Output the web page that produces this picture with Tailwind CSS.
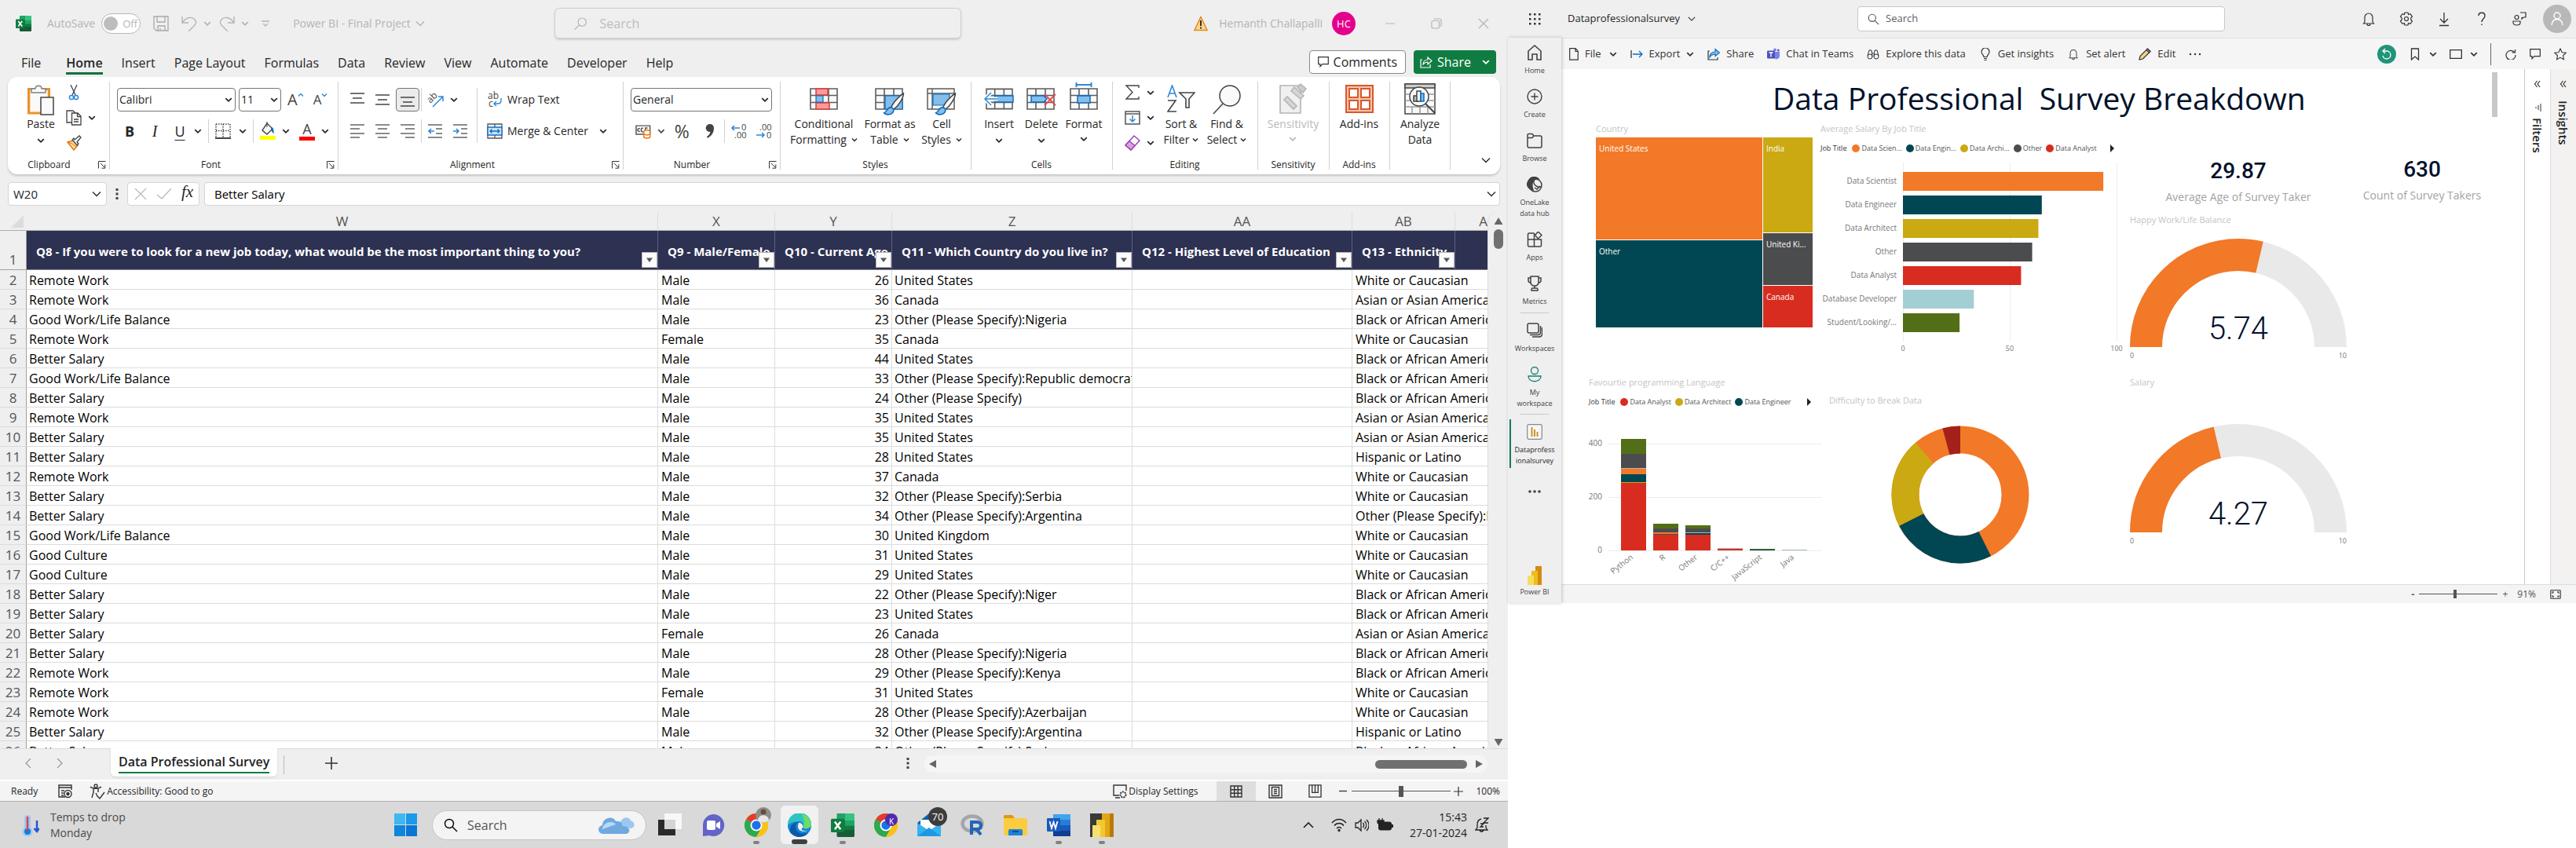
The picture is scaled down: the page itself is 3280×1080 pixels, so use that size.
<!DOCTYPE html>
<html lang="en">
<head>
<meta charset="utf-8">
<title>Survey workbook and report</title>
<script src="https://cdn.jsdelivr.net/npm/@tailwindcss/browser@4"></script>
</head>
<body class="bg-white font-['Open_Sans','Noto_Sans',sans-serif] text-[#262626]">

<!-- Shared symbols -->
<svg class="hidden" aria-hidden="true">
  <symbol id="chev" viewBox="0 0 8 8"><path d="M1 2.5l3 3 3-3" fill="none" stroke="currentColor" stroke-width="1.4"/></symbol>
  <symbol id="chevbig" viewBox="0 0 12 12"><path d="M1 3.5l5 5 5-5" fill="none" stroke="currentColor" stroke-width="1.3"/></symbol>
  <symbol id="mag" viewBox="0 0 18 18"><circle cx="11" cy="7" r="5.5" fill="none" stroke="currentColor" stroke-width="1.3"/><path d="M7 11l-6 6" stroke="currentColor" stroke-width="1.3"/></symbol>
  <symbol id="magr" viewBox="0 0 18 18"><circle cx="7" cy="7" r="5.5" fill="none" stroke="currentColor" stroke-width="1.4"/><path d="M11 11l6 6" stroke="currentColor" stroke-width="1.4"/></symbol>
  <symbol id="launch" viewBox="0 0 10 10"><path d="M.5 9.500V.5H9.500M3 3l5 5M8.800 4.500v4.700H4.500" fill="none" stroke="#333" stroke-width="1"/></symbol>
  <symbol id="excel" viewBox="0 0 20 20"><path fill="#21a366" d="M5 0h7.500v6H5z"/><path fill="#33c481" d="M12 0h7a1 1 0 0 1 1 1v5h-8z"/><path fill="#107c41" d="M5 6h7.500v8H5z"/><path fill="#107c41" d="M12 10h8v5h-8z"/><path fill="#21a366" d="M12 6h8v4.500h-8z"/><path fill="#185c37" d="M5 14h15v5a1 1 0 0 1-1 1H6a1 1 0 0 1-1-1z"/><rect y="4.500" width="11.500" height="11.500" rx="1" fill="#107c41"/><path d="M3.300 7l4.900 6.500M8.200 7l-4.900 6.500" stroke="#fff" stroke-width="1.7"/></symbol>
  <symbol id="chrome" viewBox="0 0 30 30"><circle cx="15" cy="15" r="15" fill="#fbc116"/><path d="M15 15L2 7.500A15 15 0 0 1 28 7.500H15z" fill="#e33b2e"/><path d="M15 15L2 7.500A15 15 0 0 0 15 30l6.500-11.200z" fill="#2da94f"/><path d="M15 7.500h13A15 15 0 0 1 15 30l6.500-11.200z" fill="#fbc116"/><circle cx="15" cy="15" r="7.500" fill="#fff"/><circle cx="15" cy="15" r="5.700" fill="#1a73e8"/></symbol>
  <symbol id="grid3" viewBox="0 0 36 28"><path d="M1 1h34v26H1zM12 1v26M24 1v26M1 9.500h34M1 18.500h34" fill="#fafafa" stroke="#5c5c5c" stroke-width="1.600"/></symbol>
  <symbol id="brush" viewBox="0 0 26 28"><path d="M25 1C20 4 12 12 10 18l3 2.500C18 17 25 7 25 1z" fill="#fafafa" stroke="#444" stroke-width="1.500"/><path d="M10 18c-6 0-5 6-9 7 4 3.500 12 2 12-4.500z" fill="#83beec" stroke="#0f6cbd" stroke-width="1.500"/></symbol>
  <symbol id="bell" viewBox="0 0 16 20"><path d="M3 14V8a5 5 0 0 1 10 0v6l1.500 2H1.500zM6 16.500a2 2 0 0 0 4 0" fill="none" stroke="currentColor" stroke-width="1.200"/></symbol>
</svg>

<div class="grid grid-cols-[24fr_17fr] items-start">

<!-- ================= Spreadsheet desktop ================= -->
<section class="flex h-screen min-w-0 flex-col overflow-hidden bg-[#efefef]">

  <header class="flex h-[60px] shrink-0 items-center pl-5 text-sm text-[#b4b4b4]">
    <svg class="size-5"><use href="#excel"/></svg>
    <label class="ml-5 flex items-center gap-2"><span>AutoSave</span>
      <span class="flex h-[26px] w-[50px] items-center gap-1.5 rounded-full border border-[#b8b8b8] bg-white pl-0.5 text-[13px]"><input type="checkbox" class="size-[18px] appearance-none rounded-full bg-[#bdbdbd]">Off</span>
    </label>
    <button class="ml-4" aria-label="Save"><svg class="size-5" viewBox="0 0 20 20" fill="none" stroke="#a9a9a9" stroke-width="1.300"><path d="M1 1h18v18H4l-3-3zM5 1v7h10V1M6 19v-6h9v6M9 19v-3"/></svg></button>
    <button class="ml-4 flex items-center gap-2" aria-label="Undo"><svg class="size-5" viewBox="0 0 20 20" fill="none" stroke="#b4b4b4" stroke-width="1.400"><path d="M1 1v8h8M1 9C6 2 12 1 16 4s3 7-1 10l-6 6"/></svg><svg class="size-2.5"><use href="#chev"/></svg></button>
    <button class="ml-2.5 flex items-center gap-2" aria-label="Redo"><svg class="size-5" viewBox="0 0 20 20" fill="none" stroke="#b4b4b4" stroke-width="1.400"><path d="M19 1v8h-8M19 9C14 2 8 1 4 4s-3 7 1 10l6 6"/></svg><svg class="size-2.5"><use href="#chev"/></svg></button>
    <button class="ml-4" aria-label="Customize toolbar"><svg class="size-2.5" viewBox="0 0 10 10" fill="none" stroke="#b4b4b4" stroke-width="1.300"><path d="M0 2h10M2 5l3 3 3-3"/></svg></button>
    <button class="ml-[30px] flex items-center gap-1.5 whitespace-nowrap">Power BI - Final Project <svg class="size-3"><use href="#chevbig"/></svg></button>
    <label class="ml-[165px] flex h-10 w-[518px] items-center gap-4 rounded-md border border-b-2 border-[#cfcfcf] pl-6 text-[#b4b4b4] shadow-sm">
      <svg class="size-[18px]"><use href="#mag"/></svg>
      <input class="w-full bg-transparent text-base outline-none placeholder:text-[#bcbcbc]" placeholder="Search" aria-label="Search workbook">
    </label>
    <div class="ml-auto flex items-center pr-6">
      <svg class="h-5 w-[18px]" viewBox="0 0 18 20"><path d="M9 1.500l8 17H1z" fill="#fbd88c" stroke="#e08a26" stroke-width="1.500"/><path d="M9 6v7M9 14.500v2" stroke="#333" stroke-width="2"/></svg>
      <span class="ml-3.5 whitespace-nowrap">Hemanth Challapalli</span>
      <span class="ml-3 grid size-[30px] place-items-center rounded-full bg-[#e3008c] text-[13px] text-white">HC</span>
      <button class="ml-[38px]" aria-label="Minimize"><svg class="size-3" viewBox="0 0 12 12"><path d="M0 6h12" stroke="#b4b4b4"/></svg></button>
      <button class="ml-[46px]" aria-label="Restore"><svg class="size-3.5" viewBox="0 0 14 14" fill="none" stroke="#b4b4b4" stroke-width="1.200"><rect x="1" y="3.500" width="9.500" height="9.500" rx="1.500"/><path d="M3.500 1H11a2 2 0 0 1 2 2v8"/></svg></button>
      <button class="ml-[46px]" aria-label="Close"><svg class="size-3.5" viewBox="0 0 14 14"><path d="M1 1l12 12M13 1L1 13" stroke="#b4b4b4" stroke-width="1.200"/></svg></button>
    </div>
  </header>

  <nav class="flex h-[38px] shrink-0 items-start gap-6 whitespace-nowrap pl-[27px] pr-[15px] pt-2 text-base leading-6">
    <a href="#">File</a>
    <a href="#" class="ml-2 border-b-[3px] border-[#0f703b] font-semibold">Home</a>
    <a href="#">Insert</a><a href="#">Page Layout</a><a href="#">Formulas</a><a href="#">Data</a><a href="#">Review</a><a href="#">View</a><a href="#">Automate</a><a href="#">Developer</a><a href="#">Help</a>
    <button class="-mt-1 ml-auto flex h-[30px] items-center gap-1.5 rounded border border-[#8a8a8a] bg-white px-2.5"><svg class="size-3.5" viewBox="0 0 14 14"><path d="M.7.7h12.600v9H6l-3 3v-3H.7z" fill="none" stroke="#333" stroke-width="1.200"/></svg>Comments</button>
    <button class="-ml-3.5 -mt-1 flex h-[30px] items-center gap-1.5 rounded bg-[#107c41] px-2 text-white"><svg class="size-4" viewBox="0 0 16 16" fill="none" stroke="#fff" stroke-width="1.200"><path d="M3 5H1v10h12v-4M4 11c0-4 3-6 6-6V2l5 4.500-5 4.500V8c-3 0-4.500 1-6 3z"/></svg>Share<svg class="ml-2 size-2.5"><use href="#chev"/></svg></button>
  </nav>

  <!-- Ribbon -->
  <div class="mx-2.5 flex h-[124px] shrink-0 rounded-xl bg-white text-sm shadow-[0_2px_3px_rgba(0,0,0,0.18)]">
    <section class="relative flex w-[129px] shrink-0 pl-5">
      <button class="flex w-11 flex-col items-center pt-2.5 leading-5"><svg class="h-10 w-[34px]" viewBox="0 0 34 40"><path d="M1.500 5.500h26V36H1.500z" fill="#fafafa" stroke="#e8912d" stroke-width="3"/><path d="M3.500 7.500h22V34h-22z" fill="#fafafa" stroke="#fbe0a8"/><path d="M5 10V5h5c0-5 8-5 8 0h5v5z" fill="#fafafa" stroke="#808080" stroke-width="1.400"/><path d="M17 16h16v22H17z" fill="#fafafa" stroke="#444" stroke-width="1.500"/></svg>Paste<svg class="mt-1.5 size-2.5"><use href="#chev"/></svg></button>
      <div class="ml-2.5 flex flex-col gap-3 pt-2.5">
        <button aria-label="Cut"><svg class="size-5" viewBox="0 0 20 20" fill="none"><path d="M6 0l6 13M14 0L8 13" stroke="#444" stroke-width="1.300"/><circle cx="7" cy="16" r="2.600" stroke="#2b88d8" stroke-width="1.500"/><circle cx="13" cy="16" r="2.600" stroke="#2b88d8" stroke-width="1.500"/></svg></button>
        <button class="flex items-center gap-2" aria-label="Copy"><svg class="size-5" viewBox="0 0 20 20" fill="#fafafa" stroke="#444" stroke-width="1.300"><path d="M8 16H1V1h8l3 3"/><path d="M7.500 4H15l4 4v11H7.500zM14.500 4v4.500H19M10 12h6M10 15h6"/></svg><svg class="size-2.5"><use href="#chev"/></svg></button>
        <button aria-label="Format Painter"><svg class="size-5" viewBox="0 0 20 20"><path d="M2 9l8 10 5-6-6-6z" fill="#fbe0a8" stroke="#e8740c" stroke-width="1.500"/><path d="M2 9l6 2 5 4" stroke="#e8740c" fill="none"/><path d="M8 6l6 7 2-2-2-2 5-6-2-2-6 5-1-2z" fill="#fafafa" stroke="#444" stroke-width="1.300"/></svg></button>
      </div>
      <span class="absolute inset-x-0 bottom-1 pr-6 text-center text-xs">Clipboard</span><svg class="absolute bottom-[7px] right-1 size-2.5"><use href="#launch"/></svg>
    </section>
    <section class="relative w-[291px] shrink-0 pt-3.5 before:absolute before:inset-y-1.5 before:left-0 before:w-px before:bg-[#d1d1d1]">
      <div class="flex h-[30px] items-center pl-2.5">
        <label class="relative"><select aria-label="Font name" class="h-[30px] w-[151px] appearance-none rounded border border-[#757575] bg-white pl-0.5"><option>Calibri</option></select><svg class="pointer-events-none absolute right-1 top-2.5 size-2.5"><use href="#chev"/></svg></label>
        <label class="relative ml-1"><select aria-label="Font size" class="h-[30px] w-[54px] appearance-none rounded border border-[#757575] bg-white pl-0.5"><option>11</option></select><svg class="pointer-events-none absolute right-1 top-2.5 size-2.5"><use href="#chev"/></svg></label>
        <button class="ml-2 flex items-start text-[20px] leading-6 text-[#444]" aria-label="Grow font">A<svg class="mt-0.5 size-2 rotate-180 text-[#2b88d8]"><use href="#chev"/></svg></button>
        <button class="ml-3 flex items-start text-[17px] leading-6 text-[#444]" aria-label="Shrink font">A<svg class="mt-0.5 size-2 text-[#2b88d8]"><use href="#chev"/></svg></button>
      </div>
      <div class="mt-2.5 flex h-[30px] items-center pl-2.5 text-lg">
        <button class="w-8 font-bold">B</button><button class="w-8 font-['Liberation_Serif',serif] text-xl italic">I</button><button class="w-8 underline underline-offset-4">U</button>
        <svg class="ml-0.5 size-2.5"><use href="#chev"/></svg><i class="ml-2 h-full w-px bg-[#d1d1d1]"></i>
        <button class="ml-2" aria-label="Borders"><svg class="size-5" viewBox="0 0 20 20" fill="none" stroke="#444"><path d="M1 1h18v17M1 1v17M10 1v17M1 9.500h18" stroke-width="1.500" stroke-dasharray="1.500 1.500"/><path d="M0 19h20" stroke-width="2"/></svg></button>
        <svg class="ml-2.5 size-2.5"><use href="#chev"/></svg><i class="ml-2 h-full w-px bg-[#d1d1d1]"></i>
        <button class="ml-2" aria-label="Fill colour"><svg class="h-6 w-5" viewBox="0 0 20 24"><path d="M9 2L3 11l6 5 7-7z" fill="#fafafa" stroke="#444" stroke-width="1.400"/><path d="M9 0v7" stroke="#444"/><path d="M14 7c4 0 3 4 4 8-3-1-3-4-4-6z" fill="#0f6cbd"/><path d="M0 18h20v5H0z" fill="#ff0"/></svg></button>
        <svg class="ml-2 size-2.5"><use href="#chev"/></svg>
        <button class="ml-3 flex h-6 w-5 items-start justify-center border-b-[5px] border-[#f00] leading-[18px] text-[#444]" aria-label="Font colour">A</button>
        <svg class="ml-2 size-2.5"><use href="#chev"/></svg>
      </div>
      <span class="absolute inset-x-0 bottom-1 pr-8 text-center text-xs">Font</span><svg class="absolute bottom-[7px] right-1 size-2.5"><use href="#launch"/></svg>
    </section>
    <section class="relative w-[363px] shrink-0 pt-3.5 before:absolute before:inset-y-1.5 before:left-0 before:w-px before:bg-[#d1d1d1]">
      <div class="flex">
        <div class="flex flex-col gap-2.5 pl-2.5">
          <div class="flex h-[30px] items-center">
            <button class="grid size-[30px] place-items-center" aria-label="Top align"><svg class="size-[18px]" viewBox="0 0 18 18" stroke="#444" stroke-width="1.600"><path d="M0 1h18M3 7h12M0 13h18"/></svg></button>
            <button class="ml-0.5 grid size-[30px] place-items-center" aria-label="Middle align"><svg class="size-[18px]" viewBox="0 0 18 18" stroke="#444" stroke-width="1.600"><path d="M0 3h18M3 9h12M0 15h18"/></svg></button>
            <button class="ml-0.5 grid size-[30px] place-items-center rounded border border-[#757575] bg-[#ebebeb]" aria-label="Bottom align"><svg class="size-[18px]" viewBox="0 0 18 18" stroke="#444" stroke-width="1.600"><path d="M0 6h18M3 12h12M0 17h18"/></svg></button>
            <i class="ml-0.5 h-full w-px bg-[#d1d1d1]"></i>
            <button class="ml-2 flex items-center gap-2" aria-label="Orientation"><svg class="size-5 overflow-visible" viewBox="0 0 20 20"><text x="0" y="12" font-size="12" fill="#444" transform="rotate(-45 5 10)">ab</text><path d="M6 19L19 6M13 6h6v6" fill="none" stroke="#2b88d8" stroke-width="1.500"/></svg><svg class="size-2.5"><use href="#chev"/></svg></button>
          </div>
          <div class="flex h-[30px] items-center">
            <button class="grid size-[30px] place-items-center" aria-label="Align left"><svg class="size-[18px]" viewBox="0 0 18 18" stroke="#666" stroke-width="1.600"><path d="M0 1h18M0 6h12M0 12h18M0 17h12"/></svg></button>
            <button class="ml-0.5 grid size-[30px] place-items-center" aria-label="Centre"><svg class="size-[18px]" viewBox="0 0 18 18" stroke="#666" stroke-width="1.600"><path d="M0 1h18M3 6h12M0 12h18M3 17h12"/></svg></button>
            <button class="ml-0.5 grid size-[30px] place-items-center" aria-label="Align right"><svg class="size-[18px]" viewBox="0 0 18 18" stroke="#666" stroke-width="1.600"><path d="M0 1h18M6 6h12M0 12h18M6 17h12"/></svg></button>
            <i class="ml-0.5 h-full w-px bg-[#d1d1d1]"></i>
            <button class="ml-2" aria-label="Decrease indent"><svg class="size-[18px]" viewBox="0 0 18 18" stroke="#666" stroke-width="1.600" fill="none"><path d="M0 1h18M10 6h8M10 12h8M0 17h18"/><path d="M8 9H1M4 6L1 9l3 3" stroke="#2b88d8"/></svg></button>
            <button class="ml-3.5" aria-label="Increase indent"><svg class="size-[18px]" viewBox="0 0 18 18" stroke="#666" stroke-width="1.600" fill="none"><path d="M0 1h18M10 6h8M10 12h8M0 17h18"/><path d="M0 9h7M4 6l3 3-3 3" stroke="#2b88d8"/></svg></button>
          </div>
        </div>
        <div class="ml-3 flex flex-col gap-2.5 border-l border-[#d1d1d1] pl-3">
          <button class="flex h-[30px] items-center gap-1.5 whitespace-nowrap"><svg class="size-5 overflow-visible" viewBox="0 0 20 20"><text x="1" y="9" font-size="12" fill="#444">ab</text><text x="2" y="19" font-size="12" fill="#444">c</text><path d="M18 8v3q0 4-4 4H9M12 12l-3 3 3 3" fill="none" stroke="#2b88d8" stroke-width="1.400"/></svg>Wrap Text</button>
          <button class="flex h-[30px] items-center gap-1.5 whitespace-nowrap"><svg class="size-5" viewBox="0 0 20 20" fill="none" stroke="#555" stroke-width="1.300"><path d="M1 1h18v18H1zM10 1v4M10 15v4" /><path d="M1 5h18v10H1z" fill="#cce4f7" stroke="#0f6cbd"/><path d="M4 10h12M6.500 7.500L4 10l2.500 2.500M13.500 7.500L16 10l-2.500 2.500" stroke="#0f6cbd"/></svg>Merge &amp; Center<svg class="ml-2 size-2.5"><use href="#chev"/></svg></button>
        </div>
      </div>
      <span class="absolute inset-x-0 bottom-1 pr-5 text-center text-xs">Alignment</span><svg class="absolute bottom-[7px] right-1 size-2.5"><use href="#launch"/></svg>
    </section>
    <section class="relative w-[200px] shrink-0 px-2.5 pt-3.5 before:absolute before:inset-y-1.5 before:left-0 before:w-px before:bg-[#d1d1d1]">
      <label class="relative block"><select aria-label="Number format" class="h-[30px] w-full appearance-none rounded border border-[#757575] bg-white pl-0.5"><option>General</option></select><svg class="pointer-events-none absolute right-1 top-2.5 size-2.5"><use href="#chev"/></svg></label>
      <div class="mt-2.5 flex h-[30px] items-center pl-1.5 text-[#444]">
        <svg class="size-5" viewBox="0 0 20 20" fill="none" stroke="#555" stroke-width="1.500"><path d="M1 3h18v11H1z"/><path d="M6 6.500q-3 0-3 2t3 2M10 6a2.500 2.500 0 1 0 0 5M13 11V6h3"/><path d="M11 10v8q4 2.500 8 0v-8q-4-2.500-8 0zM11 14q4 2 8 0" fill="#fff" stroke="#e8740c"/></svg>
        <svg class="ml-2 size-2.5"><use href="#chev"/></svg>
        <button class="ml-3 w-5 text-[23px]">%</button>
        <button class="ml-5 mr-1" aria-label="Comma style"><svg class="h-5 w-3" viewBox="0 0 12 20"><path d="M5 1a5 5 0 0 1 6 5c0 6-3 10-8 13l-1-2c3-2 4-4 4.500-6A5 5 0 0 1 5 1z" fill="#444"/></svg></button>
        <i class="ml-2 h-full w-px bg-[#d1d1d1]"></i>
        <button class="ml-2" aria-label="Increase decimal"><svg class="size-5 overflow-visible" viewBox="0 0 20 20" font-size="11" fill="#444"><text x="13" y="9">0</text><text x="4" y="19">.00</text><path d="M11 6H1M4 3L1 6l3 3" fill="none" stroke="#2b88d8" stroke-width="1.500"/></svg></button>
        <button class="ml-3" aria-label="Decrease decimal"><svg class="size-5 overflow-visible" viewBox="0 0 20 20" font-size="11" fill="#444"><text x="4" y="9">.00</text><text x="13" y="19">0</text><path d="M0 15h10M7 12l3 3-3 3" fill="none" stroke="#2b88d8" stroke-width="1.500"/></svg></button>
      </div>
      <span class="absolute inset-x-0 bottom-1 pr-6 text-center text-xs">Number</span><svg class="absolute bottom-[7px] right-1 size-2.5"><use href="#launch"/></svg>
    </section>
    <section class="relative flex w-[243px] shrink-0 pl-3 before:absolute before:inset-y-1.5 before:left-0 before:w-px before:bg-[#d1d1d1]">
      <button class="flex w-[88px] flex-col items-center pt-2.5 leading-5"><svg class="h-10 w-9" viewBox="0 0 36 40"><use href="#grid3" y="4" width="36" height="28"/><path d="M8 5h15v8H8zM8 23h17v8H8z" fill="#ff9a9a" stroke="#e03a3a" stroke-width="1.500"/><path d="M8 14h9v8H8z" fill="#83beec" stroke="#0f6cbd" stroke-width="1.200"/></svg>Conditional<span class="flex items-center gap-1.5">Formatting<svg class="size-2"><use href="#chev"/></svg></span></button>
      <button class="flex w-[80px] flex-col items-center pt-2.5 leading-5"><svg class="h-10 w-[38px]" viewBox="0 0 38 40"><use href="#grid3" y="4" width="36" height="28"/><path d="M13 14h22v17H13z" fill="#83beec" stroke="#0f6cbd" stroke-width="1.200"/><use href="#brush" x="10" y="10" width="28" height="29"/></svg><span class="whitespace-nowrap">Format as</span><span class="flex items-center gap-1.5">Table<svg class="size-2"><use href="#chev"/></svg></span></button>
      <button class="flex w-[52px] flex-col items-center pt-2.5 leading-5"><svg class="h-10 w-[38px]" viewBox="0 0 38 40"><path d="M1 5h34v26H1zM7 5v26M1 11h34" fill="#fafafa" stroke="#5c5c5c" stroke-width="1.500"/><path d="M8 12h21v14H8z" fill="#83beec" stroke="#0f6cbd" stroke-width="1.200"/><use href="#brush" x="10" y="10" width="28" height="29"/></svg>Cell<span class="flex items-center gap-1.5">Styles<svg class="size-2"><use href="#chev"/></svg></span></button>
      <span class="absolute inset-x-0 bottom-1 text-center text-xs">Styles</span>
    </section>
    <section class="relative flex w-[180px] shrink-0 pl-2.5 before:absolute before:inset-y-1.5 before:left-0 before:w-px before:bg-[#d1d1d1]">
      <button class="flex w-[52px] flex-col items-center pt-2.5 leading-5"><svg class="h-10 w-[38px]" viewBox="0 0 38 40"><use href="#grid3" x="2" y="4" width="35" height="28"/><path d="M14 14h23v8H14z" fill="#83beec" stroke="#0f6cbd" stroke-width="1.500"/><path d="M17 18H2M9 10l-8 8 8 8" fill="none" stroke="#fff" stroke-width="5"/><path d="M17 18H2M9 10l-8 8 8 8" fill="none" stroke="#2b88d8" stroke-width="1.500"/></svg>Insert<svg class="mt-1.5 size-2.5"><use href="#chev"/></svg></button>
      <button class="flex w-[56px] flex-col items-center pt-2.5 leading-5"><svg class="h-10 w-[38px]" viewBox="0 0 38 40"><use href="#grid3" y="4" width="36" height="28"/><path d="M6 14h16l4 4-4 4H6z" fill="#83beec" stroke="#0f6cbd" stroke-width="1.500"/><path d="M23 12l14 14M37 12L23 26" stroke="#e8474a" stroke-width="1.800"/></svg>Delete<svg class="mt-1.5 size-2.5"><use href="#chev"/></svg></button>
      <button class="flex w-[52px] flex-col items-center pt-2.5 leading-5"><svg class="h-10 w-9 overflow-visible" viewBox="0 0 36 40"><use href="#grid3" y="4" width="36" height="28"/><path d="M10 14h16v9H10z" fill="#83beec" stroke="#0f6cbd" stroke-width="1.500"/><path d="M8.500 0h19M8.500-3v6M27.500-3v6" stroke="#2b88d8" stroke-width="2"/></svg>Format<svg class="mt-1 size-2.5"><use href="#chev"/></svg></button>
      <span class="absolute inset-x-0 bottom-1 text-center text-xs">Cells</span>
    </section>
    <section class="relative flex w-[185px] shrink-0 pl-4 before:absolute before:inset-y-1.5 before:left-0 before:w-px before:bg-[#d1d1d1]">
      <div class="flex w-[42px] flex-col gap-3 pt-2.5">
        <button class="flex items-center gap-2" aria-label="AutoSum"><svg class="size-5" viewBox="0 0 20 20"><path d="M18 4V1H2l8 8.500L2 18h16v-3" fill="none" stroke="#444" stroke-width="1.400"/></svg><svg class="size-2.5"><use href="#chev"/></svg></button>
        <button class="flex items-center gap-2" aria-label="Fill"><svg class="size-5" viewBox="0 0 20 20" fill="none"><path d="M1 2h18v16H1zM1 5h18" stroke="#555" stroke-width="1.500"/><path d="M10 7v8M6.500 11.500L10 15l3.500-3.500" stroke="#2b88d8" stroke-width="1.500"/></svg><svg class="size-2.5"><use href="#chev"/></svg></button>
        <button class="flex items-center gap-2" aria-label="Clear"><svg class="size-5" viewBox="0 0 20 20" stroke="#9b3fb5" stroke-width="1.400"><path d="M12 1l7 6-11 12-7-6z" fill="#fafafa"/><path d="M6 7.500l7 6-5 5.500-7-6z" fill="#d8a0e0"/></svg><svg class="size-2.5"><use href="#chev"/></svg></button>
      </div>
      <button class="ml-1 flex w-[52px] flex-col items-center pt-2.5 leading-5"><svg class="h-10 w-9" viewBox="0 0 36 40" fill="none" stroke-width="1.600"><path d="M1 16L6.500 1 12 16M3 11h7" stroke="#2b88d8"/><path d="M1 20h10L1 34h11" stroke="#444"/><path d="M16 10h19l-7 8v11h-4V18z" stroke="#444" fill="#fafafa"/></svg>Sort &amp;<span class="flex items-center gap-1">Filter<svg class="size-2"><use href="#chev"/></svg></span></button>
      <button class="ml-1 flex w-[56px] flex-col items-center pt-2.5 leading-5"><svg class="h-10 w-9" viewBox="0 0 36 40" fill="#fafafa" stroke="#444" stroke-width="1.500"><circle cx="22" cy="14" r="13"/><path d="M13 24L1 37"/></svg>Find &amp;<span class="flex items-center gap-1">Select<svg class="size-2"><use href="#chev"/></svg></span></button>
      <span class="absolute inset-x-0 bottom-1 text-center text-xs">Editing</span>
    </section>
    <section class="relative flex w-[91px] shrink-0 justify-center before:absolute before:inset-y-1.5 before:left-0 before:w-px before:bg-[#d1d1d1]">
      <button disabled class="flex flex-col items-center pt-2.5 leading-5 text-[#b9b9b9]"><svg class="h-10 w-[34px] overflow-visible" viewBox="0 0 34 40" fill="#f0f0f0" stroke="#b5b5b5" stroke-width="1.600"><path d="M1 1h26v35H1z"/><path d="M6 19l4-4 12 12-4 4zM15 8l4-5 12 11-4 4z" fill="#d5d5d5"/><path d="M23 3l4-4 7 6-4 5z" fill="#ccc"/></svg>Sensitivity<svg class="mt-1 size-2.5"><use href="#chev"/></svg></button>
      <span class="absolute inset-x-0 bottom-1 text-center text-xs">Sensitivity</span>
    </section>
    <section class="relative flex w-[77px] shrink-0 justify-center before:absolute before:inset-y-1.5 before:left-0 before:w-px before:bg-[#d1d1d1]">
      <button class="flex flex-col items-center pt-2.5 leading-5"><svg class="h-10 w-9" viewBox="0 0 36 40" fill="none" stroke="#d8592c" stroke-width="2"><path d="M1 1h34v34H1z" fill="#f7c3ac"/><path d="M5 5h11v11H5zM20 5h11v11H20zM5 20h11v11H5zM20 20h11v11H20z" fill="#fff"/></svg>Add-ins</button>
      <span class="absolute inset-x-0 bottom-1 text-center text-xs">Add-ins</span>
    </section>
    <section class="relative flex w-[78px] shrink-0 justify-center before:absolute before:inset-y-1.5 before:left-0 before:w-px before:bg-[#d1d1d1] after:absolute after:inset-y-1.5 after:right-0 after:w-px after:bg-[#d1d1d1]">
      <button class="flex flex-col items-center pt-2 leading-5"><svg class="mb-0.5 h-10 w-10" viewBox="0 0 40 40" fill="#fafafa" stroke="#444" stroke-width="1.500"><path d="M1 1h38v38H1z"/><path d="M1 1h38v5H1z" fill="#ccc"/><path d="M1 14h38M1 22h38M1 30h38M10 30v9M20 30v9M30 30v9" stroke="#999"/><circle cx="19" cy="17" r="12"/><path d="M27 26l12 12" stroke-width="2"/><path d="M12 16h5v7h-5z" fill="#bbb"/><path d="M16 10h5v13h-5z"/><path d="M21 13h4v10h-4z" fill="#83beec" stroke="#0f6cbd"/></svg>Analyze<span>Data</span></button>
    </section>
    <button class="ml-auto mr-3 flex items-end pb-3" aria-label="Collapse ribbon"><svg class="size-3"><use href="#chevbig"/></svg></button>
  </div>

  <!-- Formula bar -->
  <div class="mx-2.5 mt-2.5 flex h-[30px] shrink-0 items-stretch text-[15px]">
    <label class="flex w-[126px] items-center rounded border border-[#d4d4d4] bg-white px-1.5"><input aria-label="Name box" class="w-full bg-transparent outline-none" value="W20"><svg class="size-3 shrink-0"><use href="#chevbig"/></svg></label>
    <svg class="mx-2.5 my-auto h-4 w-1.5 text-[#444]" viewBox="0 0 6 16" fill="currentColor"><path d="M1.500 1h3v3h-3zM1.500 6.500h3v3h-3zM1.500 12h3v3h-3z"/></svg>
    <div class="flex w-[92px] items-center gap-3 rounded border border-[#d4d4d4] bg-white pl-2">
      <svg class="size-4" viewBox="0 0 16 16"><path d="M1 1l14 14M15 1L1 15" stroke="#bbb" stroke-width="1.300"/></svg>
      <svg class="h-4 w-5" viewBox="0 0 20 16"><path d="M1 9l6 5L19 1" fill="none" stroke="#bbb" stroke-width="1.300"/></svg>
      <button class="-mt-1 font-['Liberation_Serif',serif] text-[21px] italic">fx</button>
    </div>
    <label class="ml-1.5 flex flex-1 items-center rounded border border-[#d4d4d4] bg-white pl-3 pr-1"><input aria-label="Formula" class="w-full bg-transparent text-black outline-none" value="Better Salary"><svg class="size-3 shrink-0"><use href="#chevbig"/></svg></label>
  </div>

  <!-- Sheet -->
  <div class="mt-2 flex min-h-0 flex-1">
    <div class="min-w-0 flex-1 overflow-hidden">
      <table class="w-full table-fixed border-separate border-spacing-0 whitespace-nowrap text-base text-black">
        <colgroup><col class="w-[34px]"><col><col class="w-[149px]"><col class="w-[149px]"><col class="w-[306px]"><col class="w-[280px]"><col class="w-[131px]"><col class="w-[41px]"></colgroup>
        <thead>
          <tr class="text-[17px] text-[#555]">
            <th class="h-6 border-b border-[#b0b0b0] p-0"><svg class="ml-auto mr-1 size-4" viewBox="0 0 16 16"><path d="M16 0v16H0z" fill="#dcdcdc"/></svg></th>
            <th class="border-b border-r border-b-[#b0b0b0] border-r-[#dcdcdc] p-0 font-normal leading-[23px]">W</th><th class="border-b border-r border-b-[#b0b0b0] border-r-[#dcdcdc] p-0 font-normal leading-[23px]">X</th><th class="border-b border-r border-b-[#b0b0b0] border-r-[#dcdcdc] p-0 font-normal leading-[23px]">Y</th><th class="border-b border-r border-b-[#b0b0b0] border-r-[#dcdcdc] p-0 font-normal leading-[23px]">Z</th><th class="border-b border-r border-b-[#b0b0b0] border-r-[#dcdcdc] p-0 font-normal leading-[23px]">AA</th><th class="border-b border-r border-b-[#b0b0b0] border-r-[#dcdcdc] p-0 font-normal leading-[23px]">AB</th><th class="overflow-hidden border-b border-[#b0b0b0] p-0 pr-0 text-right font-normal leading-[23px]">A</th>
          </tr>
          <tr id="questions" class="h-[50px]"></tr>
        </thead>
        <tbody id="answers"></tbody>
      </table>
    </div>
    <div class="flex w-[26px] shrink-0 flex-col items-center rounded-full border-l border-[#dcdcdc] pb-0.5 pt-1.5 text-[#666]">
      <svg class="size-3" viewBox="0 0 12 12"><path d="M6 1l5.500 9H.5z" fill="currentColor"/></svg>
      <i class="mt-1 h-[25px] w-3 rounded-full bg-[#707070]"></i>
      <svg class="mt-auto size-3" viewBox="0 0 12 12"><path d="M6 11l5.500-9H.5z" fill="currentColor"/></svg>
    </div>
  </div>

  <!-- Sheet tabs -->
  <div class="flex h-10 shrink-0 items-start border-t border-[#dcdcdc] text-base">
    <button class="ml-[30px] mt-3" aria-label="Previous sheet"><svg class="h-3 w-3" viewBox="0 0 12 12"><path d="M9 0L3 6l6 6" fill="none" stroke="#999" stroke-width="1.300"/></svg></button>
    <button class="ml-7 mt-3" aria-label="Next sheet"><svg class="h-3 w-3" viewBox="0 0 12 12"><path d="M3 0l6 6-6 6" fill="none" stroke="#999" stroke-width="1.300"/></svg></button>
    <a href="#" class="-mt-px ml-[59px] flex h-9 items-start rounded-b-md bg-white px-2.5 pt-1 shadow-sm"><span class="whitespace-nowrap border-b-2 border-[#107c41] font-semibold leading-[26px] text-[#222]">Data Professional Survey</span></a>
    <i class="ml-2 mt-2 h-6 w-px bg-[#bbb]"></i>
    <button class="ml-[52px] mt-2.5" aria-label="New sheet"><svg class="size-4" viewBox="0 0 16 16"><path d="M8 0v16M0 8h16" stroke="#333" stroke-width="1.600"/></svg></button>
    <svg class="ml-auto mt-2.5 h-4 w-1.5" viewBox="0 0 6 16" fill="#444"><path d="M1.500 1h3v3h-3zM1.500 6.500h3v3h-3zM1.500 12h3v3h-3z"/></svg>
    <div class="ml-[18px] mr-[26px] mt-2 flex h-[22px] w-[717px] items-center rounded-full bg-[#f5f5f5] px-1.5">
      <svg class="size-2.5" viewBox="0 0 10 10"><path d="M0 5l9-5v10z" fill="#666"/></svg><i class="ml-auto mr-2.5 h-[11px] w-[117px] rounded-full bg-[#707070]"></i><svg class="size-2.5" viewBox="0 0 10 10"><path d="M10 5L1 0v10z" fill="#666"/></svg>
    </div>
  </div>

  <!-- Status bar -->
  <footer class="flex h-7 shrink-0 items-stretch border-b border-t-2 border-b-[#b0b0b0] border-t-white bg-[#f4f4f4] pl-3.5 pr-2.5 text-xs *:flex *:items-center">
    <span>Ready</span>
    <svg class="ml-[26px] my-auto size-[18px]" viewBox="0 0 18 18" fill="none" stroke="#333" stroke-width="1.400"><path d="M9 16H1V1h16v6M1 4h16M4 8h4M4 11h3M4 14h3"/><circle cx="12.500" cy="12" r="4.500"/><circle cx="12.500" cy="12" r="1.500" fill="#333"/></svg>
    <span class="ml-[22px] gap-0.5"><svg class="size-5" viewBox="0 0 20 20" fill="none" stroke="#333" stroke-width="1.400"><circle cx="8" cy="3" r="2"/><path d="M1 4c3 3 11 3 14 0M5 6v5l-2 7M11 6v5M8 12l2 4 3 3 6-8"/></svg>Accessibility: Good to go</span>
    <span class="ml-auto gap-0.5"><svg class="size-[18px]" viewBox="0 0 18 18" fill="none" stroke="#333" stroke-width="1.400"><path d="M8 14H1V1h16v7M3 17h6"/><circle cx="13" cy="13" r="3.500" stroke-dasharray="2 1" stroke-width="2"/></svg>Display Settings</span>
    <button class="ml-6 w-[50px] justify-center bg-[#dedede]" aria-label="Normal view"><svg class="size-4" viewBox="0 0 16 16" fill="none" stroke="#333" stroke-width="1.400"><path d="M1 1h14v14H1zM5.700 1v14M10.300 1v14M1 5.700h14M1 10.300h14"/></svg></button>
    <button class="w-[50px] justify-center" aria-label="Page layout view"><svg class="size-[18px]" viewBox="0 0 18 18" fill="none" stroke="#333" stroke-width="1.400"><path d="M1 1h16v16H1zM4.500 3.500h9v11h-9zM7 6.500h4M7 9h4M7 11.500h4"/></svg></button>
    <button class="w-[50px] justify-center" aria-label="Page break view"><svg class="size-[17px]" viewBox="0 0 18 18" fill="none" stroke="#333" stroke-width="1.400"><path d="M1 1h16v16H1zM5 1v10h8V1M9 1v10"/></svg></button>
    <button class="ml-1.5 text-[#333]" aria-label="Zoom out"><svg class="size-2.5" viewBox="0 0 10 10"><path d="M0 4.500h10" stroke="currentColor" stroke-width="1.300"/></svg></button>
    <input type="range" aria-label="Zoom" class="my-auto ml-1.5 h-px w-[126px] appearance-none bg-[#555] [&::-webkit-slider-thumb]:h-3.5 [&::-webkit-slider-thumb]:w-1.5 [&::-webkit-slider-thumb]:appearance-none [&::-webkit-slider-thumb]:bg-[#555]">
    <button class="ml-1" aria-label="Zoom in"><svg class="size-3" viewBox="0 0 12 12"><path d="M0 6h12M6 0v12" stroke="#333" stroke-width="1.200"/></svg></button>
    <span class="ml-4">100%</span>
  </footer>

  <!-- Taskbar -->
  <footer class="flex h-[59px] shrink-0 items-center bg-[#d9d9d9] text-sm leading-5 text-[#4a4a4a]">
    <a href="#" class="flex w-[502px] items-center gap-3.5 pl-7"><svg class="h-7 w-[22px]" viewBox="0 0 22 28"><path d="M3 5a4 4 0 0 1 8 0v12a6.500 6.500 0 1 1-8 0z" fill="#9cc9f5"/><circle cx="7" cy="22" r="4" fill="#0f7fd8"/><path d="M7 3v18" stroke="#e0404f" stroke-width="2.500"/><path d="M19 8v13M15.500 18l3.500 4 3-4" stroke="#2457d6" stroke-width="2.500" fill="none"/></svg><span>Temps to drop<br>Monday</span></a>
    <div class="flex items-center">
      <button aria-label="Start"><svg class="size-[29px]" viewBox="0 0 29 29"><path d="M0 0h14v14H0z" fill="#3cb8f2"/><path d="M15 0h14v14H15z" fill="#1a9ae8"/><path d="M0 15h14v14H0z" fill="#0f86dd"/><path d="M15 15h14v14H15z" fill="#0a76d4"/></svg></button>
      <label class="ml-[19px] flex h-[38px] w-[273px] items-center gap-3 rounded-full border border-[#c4c4c4] bg-[#f4f4f4] px-3.5"><svg class="size-[18px] shrink-0 text-black"><use href="#magr"/></svg><input aria-label="Search Windows" placeholder="Search" class="w-0 flex-1 bg-transparent text-base outline-none placeholder:text-[#555]">
        <svg class="h-[22px] w-[46px] shrink-0" viewBox="0 0 46 22"><path d="M30 14a7 7 0 0 1-1-9c4-6 11-4 12 0 6 2 6 8 1 10z" fill="#9cc7ee"/><path d="M5 22c-7-2-6-10 0-11 0-10 14-13 17-5 7-1 9 4 8 6 11 0 12 9 5 10z" fill="#6fa9e0"/><path d="M5 16c0-9 14-12 17-6" fill="#b9d9f5"/></svg></label>
      <div class="flex items-center gap-[25px] pl-[15px]">
        <button aria-label="Task view"><svg class="size-[30px]" viewBox="0 0 30 30"><path d="M0 8h22v20H0z" fill="#2a2a2a"/><path d="M8 0h22v20H8z" fill="#fff" fill-opacity=".8"/></svg></button>
        <button aria-label="Chat"><svg class="size-[30px]" viewBox="0 0 30 30"><path d="M15 1a14 14 0 1 1-5 27l-8 1V15A14 14 0 0 1 15 1z" fill="#6264c7"/><rect x="7" y="9" width="11" height="12" rx="2" fill="#fff"/><path d="M19 13l5-3v10l-5-3z" fill="#fff"/></svg></button>
        <button class="relative" aria-label="Chrome"><svg class="size-[30px]"><use href="#chrome"/></svg><svg class="absolute -right-1 -top-2 size-5" viewBox="0 0 20 20"><circle cx="10" cy="10" r="10" fill="#8d8d88"/><circle cx="10" cy="6" r="3.500" fill="#6b4a3c"/><path d="M3 17c0-9 14-9 14 0a10 10 0 0 1-14 0z" fill="#e5e5e8"/></svg><i class="absolute -bottom-[9px] left-[11px] h-1 w-2 rounded-full bg-[#808080]"></i></button>
        <button class="relative -mx-[9px] grid h-[49px] w-12 place-items-center rounded-md bg-[#f1f1f1]" aria-label="Edge"><svg class="size-[30px]" viewBox="0 0 30 30"><circle cx="15" cy="15" r="15" fill="#1583d8"/><path d="M0 15A15 15 0 0 1 30 13c0 7-8 8-11 5 3-4 0-8-5-8C7 10 2 13 0 15z" fill="#2fc3c2"/><path d="M18 .5c8 2 12 8 12 13 0 6-8 7-11 4 5-8-1-14-1-17z" fill="#6bdb6b"/><path d="M10 17c0 7 7 10 16 8A15 15 0 0 1 3 24C2 15 8 11 14 11c-3 1-4 3-4 6z" fill="#0c59a4"/><path d="M14 12c4 0 6 3 5 6-3 3-1 4 6 4 -6 2-15 0-11-10z" fill="#f1f1f1"/></svg><i class="absolute bottom-0 h-1.5 w-5 rounded-full bg-[#404040]"></i></button>
        <button class="relative" aria-label="Excel"><svg class="size-[30px]"><use href="#excel"/></svg><i class="absolute -bottom-[9px] left-[11px] h-1 w-2 rounded-full bg-[#808080]"></i></button>
        <button class="relative" aria-label="Chrome, second profile"><svg class="size-[30px]"><use href="#chrome"/></svg><span class="absolute right-0 top-0 grid size-4 place-items-center rounded-full bg-[#4f2bb0] text-[10px] text-white">K</span></button>
        <button class="relative" aria-label="Mail"><svg class="size-[30px]" viewBox="0 0 30 30"><path d="M0 12L15 0l15 12v17H0z" fill="#0f5ea8"/><path d="M4 8h22v12H4z" fill="#fff"/><path d="M0 12l15 10 15-10v17H0z" fill="#35b3f0"/><path d="M0 29l15-11 15 11z" fill="#1b9ae2"/></svg><span class="absolute -right-2 -top-2 grid size-6 place-items-center rounded-full bg-[#3d3d3d] text-[13px] text-white">70</span></button>
        <button aria-label="R"><svg class="size-[30px]" viewBox="0 0 30 30"><ellipse cx="15" cy="13" rx="12.500" ry="9.500" fill="none" stroke="#a3a5ab" stroke-width="4.500"/><path d="M14 27V11h7q5 0 5 4.500T21 20h-6M20 20l6 7" fill="none" stroke="#2266b8" stroke-width="4"/></svg></button>
        <button aria-label="Files"><svg class="size-[30px]" viewBox="0 0 30 30"><path d="M0 4q0-2 2-2h9l3 4H0z" fill="#d99a17"/><path d="M0 6h28q2 0 2 2v18q0 2-2 2H2q-2 0-2-2z" fill="#fccb3f"/><path d="M6 28v-6q0-2 2-2h14q2 0 2 2v6z" fill="#1f83d6"/><path d="M11 23h8" stroke="#0b4f91" stroke-width="2"/></svg></button>
        <button class="relative" aria-label="Word"><svg class="size-[30px]" viewBox="0 0 30 30"><path d="M8 1h22v7H8z" fill="#41a5ee"/><path d="M8 8h22v7H8z" fill="#2b7cd3"/><path d="M8 15h22v7H8z" fill="#185abd"/><path d="M8 22h22v7H8z" fill="#103f91"/><rect y="6" width="17" height="17" rx="1" fill="#185abd"/><path d="M3.500 10l2.500 9 2.500-8 2.500 8 2.500-9" fill="none" stroke="#fff" stroke-width="1.800"/></svg><i class="absolute -bottom-[9px] left-[11px] h-1 w-2 rounded-full bg-[#808080]"></i></button>
        <button class="relative" aria-label="Power BI Desktop"><svg class="size-[30px]" viewBox="0 0 30 30"><path d="M0 0h30v30H0z" fill="#3a3a3a"/><path d="M15 0h10v30H15z" fill="#e3a615"/><path d="M25 0h5v30h-5z" fill="#b87a0d"/><path d="M8 8h11v22H8z" fill="#f2c830"/><path d="M3 15h10v15H3z" fill="#f8e06e"/></svg><i class="absolute -bottom-[9px] left-[11px] h-1 w-2 rounded-full bg-[#808080]"></i></button>
      </div>
    </div>
    <div class="ml-auto flex items-center pr-6 text-[#222]">
      <svg class="size-3.5" viewBox="0 0 14 14"><path d="M1 10l6-6 6 6" fill="none" stroke="#222" stroke-width="1.600"/></svg>
      <svg class="ml-[22px] h-[18px] w-5" viewBox="0 0 20 18" fill="none" stroke="#222" stroke-width="1.400"><path d="M1 6c5-6 13-6 18 0M4 9.500c3-4 9-4 12 0M7 13c1.500-2 4.500-2 6 0"/><circle cx="10" cy="15.500" r="1"/></svg>
      <svg class="ml-2.5 h-[18px] w-[18px]" viewBox="0 0 18 18" fill="none" stroke="#222" stroke-width="1.300"><path d="M1 6h3l4-4v14l-4-4H1zM10.500 6c1.500 2 1.500 4 0 6M12.500 4c3 3 3 7 0 10M15 2c4 4 4 10 0 14"/></svg>
      <svg class="ml-2.5 h-[18px] w-[22px]" viewBox="0 0 22 18"><rect x="2.500" y="5" width="16" height="10" rx="2" fill="#222" stroke="#222"/><path d="M20 8v4" stroke="#222" stroke-width="2"/><path d="M3 0v3M7 0v3M1 3h8v3q-4 4-8 0z" stroke="#222" stroke-width="1.300" fill="#222"/></svg>
      <span class="ml-5 text-right">15:43<br>27-01-2024</span>
      <svg class="ml-2.5 h-5 w-[18px]" viewBox="0 0 18 20" fill="none" stroke="#222" stroke-width="1.300"><path d="M8 2C4 3 3 5 3 9v4l-2 3h15l-2-3v-3M6 16.500q2.500 3.500 5 0M11 1h6l-6 6h6M7 8h4l-4 4h4"/></svg>
    </div>
  </footer>
</section>

<!-- ================= Report in the browser ================= -->
<section class="flex min-w-0 flex-col bg-[#efefef]">
  <header class="flex h-12 items-center text-[13px]">
    <button class="ml-[26px]" aria-label="App launcher"><svg class="size-4" viewBox="0 0 16 16" fill="#333"><path d="M1 1h2.500v2.500H1zM7 1h2.500v2.500H7zM13 1h2.500v2.500H13zM1 7h2.500v2.500H1zM7 7h2.500v2.500H7zM13 7h2.500v2.500H13zM1 13h2.500v2.500H1zM7 13h2.500v2.500H7zM13 13h2.500v2.500H13z"/></svg></button>
    <button class="ml-[34px] flex items-center gap-2.5">Dataprofessionalsurvey <svg class="size-2.5"><use href="#chevbig"/></svg></button>
    <label class="ml-[206px] flex h-8 w-[468px] items-center gap-2 rounded border border-[#c8c8c8] bg-white pl-3 text-[#555]"><svg class="size-[15px] shrink-0"><use href="#magr"/></svg><input aria-label="Search Power BI" placeholder="Search" class="w-full bg-transparent outline-none placeholder:text-[#616161]"></label>
    <div class="ml-auto flex items-center gap-7 pr-1.5 text-[#333]">
      <button aria-label="Notifications"><svg class="size-5"><use href="#bell"/></svg></button>
      <button aria-label="Settings"><svg class="size-5" viewBox="0 0 20 20" fill="none" stroke="currentColor" stroke-width="1.200"><circle cx="10" cy="10" r="2.500"/><path d="M8 2h4l.6 2.500 2.400-.8 2.500 3.300L15.800 9v2l1.700 2-2.500 3.300-2.400-.8L12 18H8l-.6-2.500-2.400.8L2.500 13 4.200 11V9L2.500 7 5 3.700l2.400.8z"/></svg></button>
      <button aria-label="Download"><svg class="size-5" viewBox="0 0 20 20" fill="none" stroke="currentColor" stroke-width="1.300"><path d="M10 2v13M5 10l5 5 5-5M4 18.500h12"/></svg></button>
      <button aria-label="Help"><svg class="size-5" viewBox="0 0 20 20" fill="none" stroke="currentColor" stroke-width="1.400"><path d="M6 6c0-5 8-5 8 0 0 4-4 4-4 8M10 16.500v1.500"/></svg></button>
      <button aria-label="Feedback"><svg class="size-5" viewBox="0 0 20 20" fill="none" stroke="currentColor" stroke-width="1.200"><circle cx="6.500" cy="8" r="2.500"/><path d="M2 13h9v2c0 4-9 4-9 0zM11 2h7v6h-3l-2 2V8"/></svg></button>
      <button class="-ml-2 grid size-9 place-items-center rounded-full bg-[#b8b8b8]" aria-label="Account"><svg class="size-5" viewBox="0 0 20 20" fill="none" stroke="#fff" stroke-width="1.400"><circle cx="10" cy="6" r="4"/><path d="M3 18c0-10 14-10 14 0"/></svg></button>
    </div>
  </header>

  <div class="flex">
    <nav class="z-10 flex w-[68px] shrink-0 flex-col items-stretch bg-[#efefef] pt-[9px] text-center text-[9px] leading-[14px] text-[#424242] shadow-[1px_0_4px_rgba(0,0,0,0.22)]">
      <a href="#" class="flex flex-col items-center gap-1.5 pb-4"><svg class="size-5" viewBox="0 0 20 20" fill="none" stroke="#424242" stroke-width="1.600"><path d="M2 8l8-7 8 7v11h-5v-7H7v7H2z"/></svg>Home</a>
      <a href="#" class="flex flex-col items-center gap-1.5 pb-4"><svg class="size-5" viewBox="0 0 20 20" fill="none" stroke="#424242" stroke-width="1.400"><circle cx="10" cy="10" r="9"/><path d="M10 5.500v9M5.500 10h9"/></svg>Create</a>
      <a href="#" class="flex flex-col items-center gap-1.5 pb-4"><svg class="size-5" viewBox="0 0 20 20" fill="none" stroke="#424242" stroke-width="1.500"><path d="M1 7V3q0-1.500 1.500-1.500H7L9 4h8q2 0 2 2v11q0 2-2 2H3q-2 0-2-2zM1 6.500h6L9 4"/></svg>Browse</a>
      <a href="#" class="flex flex-col items-center gap-1.5 pb-4"><svg class="size-5" viewBox="0 0 20 20" fill="none" stroke="#424242" stroke-width="1.500"><path d="M3 4C6-1 13 0 15 3 8 2 5 8 8 17 0 15-1 9 3 4z" fill="#424242"/><circle cx="11" cy="11" r="8"/><path d="M9 4c-1 5 2 10 9 9M10 14l3 2 4-4"/></svg><span>OneLake<br>data hub</span></a>
      <a href="#" class="flex flex-col items-center gap-1.5 pb-4"><svg class="size-5" viewBox="0 0 20 20" fill="none" stroke="#424242" stroke-width="1.500"><path d="M9.500 2H3Q1.500 2 1.500 3.500v13.500Q1.500 19 3 19h14q1.500 0 1.500-1.500v-7.500H1.500M9.500 2v17"/><path d="M14.500 0l4.500 4.500-4.500 4.500L10.500 4.500z"/></svg>Apps</a>
      <a href="#" class="flex flex-col items-center gap-1.5 pb-[7px]"><svg class="size-5" viewBox="0 0 20 20" fill="none" stroke="#424242" stroke-width="1.500"><path d="M5 1h10v7q0 5-5 5T5 8zM5 3H2v3q0 3 3 3M15 3h3v3q0 3-3 3M10 13v3M6 19v-1.500q0-1.500 1.500-1.500h5q1.500 0 1.500 1.500V19z"/></svg>Metrics</a>
      <hr class="mx-4 border-[#c8c8c8]">
      <a href="#" class="flex flex-col items-center gap-1.5 pb-4 pt-3"><svg class="size-5" viewBox="0 0 20 20" fill="none" stroke="#424242" stroke-width="1.500"><rect x="1" y="1" width="14" height="12" rx="2"/><path d="M17.500 4v8q0 3.500-3.500 3.500H4M19.500 6v8q0 4-4 4H7"/></svg>Workspaces</a>
      <a href="#" class="flex flex-col items-center gap-1.5 pb-1.5"><svg class="size-5" viewBox="0 0 20 20" fill="none" stroke="#16806c" stroke-width="1.300"><circle cx="10" cy="5" r="4.500"/><path d="M2 12h16c0 9-16 9-16 0z"/></svg><span>My<br>workspace</span></a>
      <hr class="mx-4 border-[#c8c8c8]">
      <a href="#" class="ml-0.5 mt-1.5 flex flex-col items-center gap-1.5 border-l-2 border-[#117865] pb-0.5 pr-1 pt-1.5 text-[#242424]"><svg class="size-5" viewBox="0 0 20 20" fill="none"><rect x=".7" y=".7" width="18.600" height="18.600" rx="2" fill="#f6f6f6" stroke="#888" stroke-width="1.200"/><path d="M6.500 4v12M10 7v9M13.500 10v6" stroke="#c98a1b" stroke-width="1.800"/></svg><span>Dataprofess<br>ionalsurvey</span></a>
      <button class="mx-auto mt-6" aria-label="More"><svg class="h-3 w-4" viewBox="0 0 16 12" fill="#424242"><circle cx="2" cy="6" r="1.800"/><circle cx="8" cy="6" r="1.800"/><circle cx="14" cy="6" r="1.800"/></svg></button>
      <a href="#" class="mt-auto flex flex-col items-center gap-0.5 pb-[7px]"><svg class="size-6" viewBox="0 0 24 24"><path d="M13 0h8v24h-8z" fill="#d38b10"/><path d="M8 6h8v18H8z" fill="#edbd20"/><path d="M3 12h8v12H3z" fill="#f7dc62"/></svg>Power BI</a>
    </nav>

    <main class="flex min-w-0 flex-1 flex-col">
      <div class="flex h-10 items-center whitespace-nowrap border-t border-[#e0e0e0] bg-[#f5f5f5] pl-2.5 pr-3 text-[13px] text-[#333]">
        <button class="flex items-center"><svg class="mr-2 h-4 w-3" viewBox="0 0 12 16" fill="none" stroke="#333" stroke-width="1.200"><path d="M.7.7H8l3.300 3.500v11H.7zM8 .7v3.800h3.300"/></svg>File<svg class="ml-2.5 size-2.5"><use href="#chev"/></svg></button>
        <button class="ml-[17px] flex items-center"><svg class="mr-2 size-4" viewBox="0 0 16 16" fill="none" stroke="#0f6cbd" stroke-width="1.300"><path d="M1 3v10" stroke="#333"/><path d="M3 8h12M11 4l4 4-4 4"/></svg>Export<svg class="ml-2 size-2.5"><use href="#chev"/></svg></button>
        <button class="ml-[17px] flex items-center"><svg class="mr-2 size-4" viewBox="0 0 16 16" fill="none" stroke="#333" stroke-width="1.200"><path d="M3 4H1v11h12v-3"/><path d="M3 12c0-5 3-7 7-7V1.500L15.500 6 10 10.500V8c-3 0-5 1-7 4z" fill="#83beec" stroke="#0f6cbd"/></svg>Share</button>
        <button class="ml-[17px] flex items-center"><svg class="mr-2 size-4" viewBox="0 0 16 16"><path d="M9 5h7v5a4 4 0 0 1-7 3z" fill="#7b83eb"/><circle cx="10" cy="2.500" r="2" fill="#7b83eb"/><circle cx="14.300" cy="3" r="1.500" fill="#5059c9"/><rect y="3.500" width="10" height="10" rx="1" fill="#4b53bc"/><path d="M2.500 6h5M5 6v5.500" stroke="#fff" stroke-width="1.300"/></svg>Chat in Teams</button>
        <button class="ml-[17px] flex items-center"><svg class="mr-2 size-4" viewBox="0 0 16 16" fill="none" stroke="#333"><circle cx="4" cy="11" r="3"/><circle cx="12" cy="11" r="3"/><path d="M1 10L3 3h3l1 8M15 10l-2-7h-3L9 11M7 7h2"/></svg>Explore this data</button>
        <button class="ml-[17px] flex items-center"><svg class="mr-2 size-4" viewBox="0 0 16 16" fill="none" stroke="#333" stroke-width="1.200"><path d="M6 11.500C6 9 3 8 3 5a5 5 0 0 1 10 0c0 3-3 4-3 6.500zM6 13.500h4M6.500 15.500h3"/></svg>Get insights</button>
        <button class="ml-[17px] flex items-center"><svg class="mr-2 size-4"><use href="#bell"/></svg>Set alert</button>
        <button class="ml-[17px] flex items-center"><svg class="mr-2 size-4" viewBox="0 0 16 16" stroke="#333" stroke-width="1.200"><path d="M1 15l1-4.500L11.500 1 15 4.500 5.500 14z" fill="#f6d58a"/><path d="M10 2.500L11.500 1 15 4.500 13.500 6z" fill="#c9a0dc"/></svg>Edit</button>
        <button class="ml-[17px]" aria-label="More options"><svg class="h-2 w-4" viewBox="0 0 16 8" fill="#333"><circle cx="2" cy="4" r="1.200"/><circle cx="8" cy="4" r="1.200"/><circle cx="14" cy="4" r="1.200"/></svg></button>
        <button class="ml-auto grid size-6 place-items-center rounded-full bg-[#1f9479]" aria-label="Reset"><svg class="size-4" viewBox="0 0 16 16" fill="none" stroke="#fff" stroke-width="1.300"><path d="M6 1L3 4l3 3M3 4h5a5 5 0 1 1-5 6"/></svg></button>
        <button class="ml-[18px] flex items-center gap-3" aria-label="Bookmark"><svg class="h-4 w-3" viewBox="0 0 12 16"><path d="M1.500 1h9v14L6 11l-4.500 4z" fill="none" stroke="#333" stroke-width="1.300"/></svg><svg class="size-2.5"><use href="#chev"/></svg></button>
        <button class="ml-4 flex items-center gap-2.5" aria-label="View"><svg class="h-3 w-4" viewBox="0 0 16 12"><path d="M.7.7h14.600v10.600H.7z" fill="none" stroke="#333" stroke-width="1.300"/></svg><svg class="size-2.5"><use href="#chev"/></svg></button>
        <i class="ml-4 h-7 w-px bg-[#666]"></i>
        <button class="ml-[18px]" aria-label="Refresh"><svg class="size-3.5" viewBox="0 0 14 14" fill="none" stroke="#333" stroke-width="1.200"><path d="M12.500 1v4H8.500M12 5A6 6 0 1 0 13 8"/></svg></button>
        <button class="ml-[17px]" aria-label="Comment"><svg class="size-3.5" viewBox="0 0 14 14"><path d="M.7.7h12.600v9H6l-3 3v-3H.7z" fill="none" stroke="#333" stroke-width="1.200"/></svg></button>
        <button class="ml-[17px]" aria-label="Favourite"><svg class="size-4" viewBox="0 0 16 16"><path d="M8 1l2.200 4.700 5 .6-3.700 3.500 1 5L8 12.300 3.500 14.800l1-5L.8 6.300l5-.6z" fill="none" stroke="#333" stroke-width="1.100"/></svg></button>
      </div>

      <div class="flex bg-white">
        <article class="relative min-w-0 flex-1 pb-2.5 pt-[9px]">
          <i class="absolute right-[34px] top-1 h-[57px] w-[7px] bg-[#c8c8c8]"></i>
          <h1 class="h-[59px] whitespace-pre pl-[269px] text-[39px] leading-[56px] text-[#01112b]">Data Professional  Survey Breakdown</h1>
          <div class="grid grid-cols-[295px_394px_1fr] pl-[35px] text-[11px] leading-4 text-[#c4c4c4]">

            <section class="h-[323px] pl-[9px]">
              <h2>Country</h2>
              <div class="mt-[3px] grid h-[242px] w-[276px] grid-cols-[212fr_63fr] gap-px text-[10px] text-white">
                <div class="grid grid-rows-[130fr_111fr] gap-px *:px-1 *:py-1.5"><div class="bg-[#f27927]">United States</div><div class="bg-[#004753]">Other</div></div>
                <div class="grid grid-rows-[121fr_66fr_53fr] gap-px *:px-1 *:py-1.5"><div class="bg-[#caa912]">India</div><div class="bg-[#4b4c4e]">United Ki...</div><div class="bg-[#d92c20]">Canada</div></div>
              </div>
            </section>

            <section>
              <h2>Average Salary By Job Title</h2>
              <ul class="mt-[11px] flex h-3 items-center gap-[5px] whitespace-nowrap text-[9px] leading-3 text-[#555] *:flex *:items-center *:gap-0.5 [&_i]:size-2.5 [&_i]:rounded-full">
                <li class="pr-0.5 text-[#333]">Job Title</li><li><i class="bg-[#f27927]"></i>Data Scien...</li><li><i class="bg-[#004753]"></i>Data Engin...</li><li><i class="bg-[#caa912]"></i>Data Archi...</li><li><i class="bg-[#4b4c4e]"></i>Other</li><li><i class="bg-[#d92c20]"></i>Data Analyst</li>
                <li class="pl-3"><svg class="h-2.5 w-1.5" viewBox="0 0 6 10"><path d="M0 0l5 5-5 5z" fill="#222"/></svg></li>
              </ul>
              <svg class="mt-2.5 h-[245px] w-[394px]" viewBox="0 0 394 245" font-size="10" fill="#777">
                <path d="M105.500 2v228M241.500 2v228M377.500 2v228" stroke="#ececec"/>
                <g id="salaryBars"></g>
                <g text-anchor="middle" font-size="9"><text x="105" y="242">0</text><text x="241" y="242">50</text><text x="377" y="242">100</text></g>
              </svg>
            </section>

            <section>
              <div class="flex text-center text-sm leading-5 text-[#a3a3a3]">
                <div class="w-[276px] pt-[46px]"><p class="font-['Roboto',sans-serif] text-[28px] font-medium leading-8 text-[#01112b]">29.87</p><p class="mt-[7px]">Average Age of Survey Taker</p></div>
                <div class="w-[192px] pt-11"><p class="font-['Roboto',sans-serif] text-[28px] font-medium leading-8 text-[#01112b]">630</p><p class="mt-[7px]">Count of Survey Takers</p></div>
              </div>
              <h2 class="mt-[11px]">Happy Work/Life Balance</h2>
              <svg class="mt-3 h-40 w-[276px]" viewBox="0 0 276 160" font-size="9" fill="#777">
                <path d="M20.500 142a117.500 117.500 0 0 1 235 0" fill="none" stroke="#e9e9e9" stroke-width="41"/>
                <path d="M20.500 142a117.500 117.500 0 0 1 235 0" fill="none" stroke="#f27927" stroke-width="41" pathLength="10" stroke-dasharray="5.740 10"/>
                <text x="138" y="132" text-anchor="middle" font-family="Roboto" font-weight="300" font-size="40" fill="#01112b">5.74</text>
                <text x="0" y="156">0</text><text x="276" y="156" text-anchor="end">10</text>
              </svg>
            </section>

            <section>
              <h2>Favourtie programming Language</h2>
              <ul class="mt-[11px] flex h-3 items-center gap-[5px] whitespace-nowrap text-[9px] leading-3 text-[#555] *:flex *:items-center *:gap-0.5 [&_i]:size-2.5 [&_i]:rounded-full">
                <li class="pr-0.5 text-[#333]">Job Title</li><li><i class="bg-[#d92c20]"></i>Data Analyst</li><li><i class="bg-[#caa912]"></i>Data Architect</li><li><i class="bg-[#004753]"></i>Data Engineer</li>
                <li class="pl-4"><svg class="h-2.5 w-1.5" viewBox="0 0 6 10"><path d="M0 0l5 5-5 5z" fill="#222"/></svg></li>
              </ul>
              <svg class="mt-8 h-[184px] w-[295px] overflow-visible" viewBox="0 0 295 184" font-size="10" fill="#777" text-anchor="end">
                <path d="M25 15.500h271M25 83.500h271M25 151.500h271" stroke="#ececec"/>
                <text x="17" y="18">400</text><text x="17" y="86">200</text><text x="17" y="154">0</text>
                <g id="languageBars"></g>
              </svg>
            </section>

            <section class="pl-[11px] pt-[23px]">
              <h2>Difficulty to Break Data</h2>
              <svg class="ml-[77px] mt-[22px] size-[180px]" viewBox="0 0 180 180" fill="none" stroke-width="35">
                <g transform="rotate(-90 90 90)">
                  <circle cx="90" cy="90" r="70" pathLength="360" stroke="#f27927"/>
                  <circle cx="90" cy="90" r="70" pathLength="360" stroke="#004753" stroke-dasharray="89.500 270.500" stroke-dashoffset="-153.400"/>
                  <circle cx="90" cy="90" r="70" pathLength="360" stroke="#caa912" stroke-dasharray="76.500 283.500" stroke-dashoffset="-242.900"/>
                  <circle cx="90" cy="90" r="70" pathLength="360" stroke="#a3211a" stroke-dasharray="15 345" stroke-dashoffset="-345"/>
                </g>
              </svg>
            </section>

            <section>
              <h2>Salary</h2>
              <svg class="mt-[41px] h-40 w-[276px]" viewBox="0 0 276 160" font-size="9" fill="#777">
                <path d="M20.500 142a117.500 117.500 0 0 1 235 0" fill="none" stroke="#e9e9e9" stroke-width="41"/>
                <path d="M20.500 142a117.500 117.500 0 0 1 235 0" fill="none" stroke="#f27927" stroke-width="41" pathLength="10" stroke-dasharray="4.270 10"/>
                <text x="138" y="132" text-anchor="middle" font-family="Roboto" font-weight="300" font-size="40" fill="#01112b">4.27</text>
                <text x="0" y="156">0</text><text x="276" y="156" text-anchor="end">10</text>
              </svg>
            </section>
          </div>
        </article>
        <aside class="flex w-[33px] flex-col items-center border-l border-[#c8c8c8] pt-3.5 text-[15px] font-semibold text-[#222]">
          <svg class="size-2.5" viewBox="0 0 10 10" fill="none" stroke="#333" stroke-width="1.200"><path d="M4.500 1l-3 4 3 4M8 1L5 5l3 4"/></svg>
          <svg class="mb-2 mt-5 size-2.5" viewBox="0 0 10 10" stroke="#333"><path d="M9 0v10M6 2v6M3 4v2"/></svg>
          <span class="[writing-mode:vertical-rl]">Filters</span>
        </aside>
        <aside class="flex w-[33px] flex-col items-center border-l border-[#dcdcdc] bg-[#f3f2f1] pt-3.5 text-[15px] font-semibold text-[#222]">
          <svg class="mb-4 size-2.5" viewBox="0 0 10 10" fill="none" stroke="#333" stroke-width="1.200"><path d="M4.500 1l-3 4 3 4M8 1L5 5l3 4"/></svg>
          <span class="[writing-mode:vertical-rl]">Insights</span>
        </aside>
      </div>

      <footer class="flex h-6 items-center justify-end border-t border-[#dcdcdc] bg-[#f4f4f4] pr-[19px] text-xs text-[#555]">
        <button aria-label="Zoom out" class="font-bold">-</button>
        <input type="range" aria-label="Report zoom" value="45" class="mx-1.5 h-px w-[100px] appearance-none bg-[#555] [&::-webkit-slider-thumb]:h-[11px] [&::-webkit-slider-thumb]:w-1 [&::-webkit-slider-thumb]:appearance-none [&::-webkit-slider-thumb]:bg-[#555]">
        <button aria-label="Zoom in">+</button>
        <span class="ml-3">91%</span>
        <button class="ml-[18px]" aria-label="Fit to page"><svg class="h-3 w-3.5" viewBox="0 0 14 12" fill="none" stroke="#555" stroke-width="1.300"><rect x=".7" y=".7" width="12.600" height="10.600" rx="1"/><path d="M3 5V3h2M9 3h2v2M11 7v2H9M5 9H3V7"/></svg></button>
      </footer>
    </main>
  </div>
</section>
</div>

<script>
const questions = ['Q8 - If you were to look for a new job today, what would be the most important thing to you?', 'Q9 - Male/Female', 'Q10 - Current Age', 'Q11 - Which Country do you live in?', 'Q12 - Highest Level of Education', 'Q13 - Ethnicity'];
const R = 'Remote Work', S = 'Better Salary', G = 'Good Work/Life Balance', C = 'Good Culture';
const O = 'Other (Please Specify)', US = 'United States';
const W = 'White or Caucasian', A = 'Asian or Asian American', B = 'Black or African American', H = 'Hispanic or Latino';
const answers = [
  [R,'Male',26,US,W],[R,'Male',36,'Canada',A],[G,'Male',23,O+':Nigeria',B],[R,'Female',35,'Canada',W],[S,'Male',44,US,B],
  [G,'Male',33,O+':Republic democrat',B],[S,'Male',24,O,B],[R,'Male',35,US,A],[S,'Male',35,US,A],[S,'Male',28,US,H],
  [R,'Male',37,'Canada',W],[S,'Male',32,O+':Serbia',W],[S,'Male',34,O+':Argentina',O+':Latin'],[G,'Male',30,'United Kingdom',W],
  [C,'Male',31,US,W],[C,'Male',29,US,W],[S,'Male',22,O+':Niger',B],[S,'Male',23,US,B],[S,'Female',26,'Canada',A],
  [S,'Male',28,O+':Nigeria',B],[R,'Male',29,O+':Kenya',B],[R,'Female',31,US,W],[R,'Male',28,O+':Azerbaijan',W],
  [S,'Male',32,O+':Argentina',H],[S,'Male',34,O+':Sudan',B]
];
document.getElementById('questions').innerHTML =
  '<th class="border-b border-r border-[#a0a0a0] p-0 pb-0.5 align-bottom text-[17px] font-normal leading-5 text-[#555]">1</th>' +
  questions.map(q => `<th class="relative overflow-hidden border-b border-r border-b-[#8a8a8a] border-r-[#5c608a] bg-[#2d3152] p-0 pl-3 pt-0.5 text-left text-[15px] font-bold leading-5 text-white">${q}<button aria-label="Filter" class="absolute bottom-0.5 right-0 grid size-5 place-items-center border border-[#b5b5b5] bg-[#fbfbfb]"><svg class="size-2" viewBox="0 0 8 8"><path d="M0 1.500h8L4 7z" fill="#555"/></svg></button></th>`).join('') +
  '<th class="border-b border-[#8a8a8a] bg-[#2d3152] p-0"></th>';
document.getElementById('answers').innerHTML = answers.map((r, i) => `<tr>
  <th class="h-[25px] border-b border-r border-b-[#dcdcdc] border-r-[#a0a0a0] p-0 pt-0.5 text-[17px] font-normal leading-[22px] text-[#555]">${i + 2}</th>
  <td class="border-b border-r border-[#dcdcdc] bg-white p-0 pl-[3px] pt-0.5 leading-[22px]">${r[0]}</td>
  <td class="border-b border-r border-[#dcdcdc] bg-white p-0 pl-1 pt-0.5 leading-[22px]">${r[1]}</td>
  <td class="border-b border-r border-[#dcdcdc] bg-white p-0 pr-[3px] pt-0.5 text-right leading-[22px]">${r[2]}</td>
  <td class="overflow-hidden border-b border-r border-[#dcdcdc] bg-white p-0 pl-[3px] pt-0.5 leading-[22px]">${r[3]}</td>
  <td class="border-b border-r border-[#dcdcdc] bg-white p-0"></td>
  <td colspan="2" class="overflow-hidden border-b border-[#dcdcdc] bg-white p-0 pl-1 pt-0.5 leading-[22px]">${r[4]}</td></tr>`).join('');

const salary = [['Data Scientist',93.8,'#f27927'],['Data Engineer',65,'#004753'],['Data Architect',63.4,'#caa912'],['Other',60.5,'#4b4c4e'],['Data Analyst',55.3,'#d92c20'],['Database Developer',33.2,'#a3ced4'],['Student/Looking/...',26.5,'#526f17']];
document.getElementById('salaryBars').innerHTML = salary.map(([n, v, c], i) =>
  `<text x="97" y="${29 + 30 * i}" text-anchor="end">${n}</text><rect x="105" y="${14 + 30 * i}" width="${v * 2.72}" height="24" fill="${c}"/>`).join('');

const red = '#d92c20', yellow = '#caa912', teal = '#004753', orange = '#f27927', light = '#a9b9b9', dark = '#4b4c4e', green = '#526f17';
const languages = [
  ['Python', [[red,86],[yellow,1],[teal,10],[orange,7],[light,1],[dark,18],[green,19]]],
  ['R', [[red,20],[dark,1],[orange,2],[dark,5],[green,6]]],
  ['Other', [[red,20],[teal,2],[light,1],[dark,5],[green,4]]],
  ['C/C++', [[red,2],[light,1]]], ['JavaScript', [[teal,1],[green,1]]], ['Java', [[light,1]]]
];
document.getElementById('languageBars').innerHTML = languages.map(([n, parts], i) => {
  let y = 151; const x = 41 + 41 * i;
  return parts.map(([c, h]) => `<rect x="${x}" y="${y -= h}" width="32" height="${h}" fill="${c}"/>`).join('') +
    `<text font-size="10" transform="translate(${x + 16} 161) rotate(-38)">${n}</text>`;
}).join('');
</script>
</body>
</html>
